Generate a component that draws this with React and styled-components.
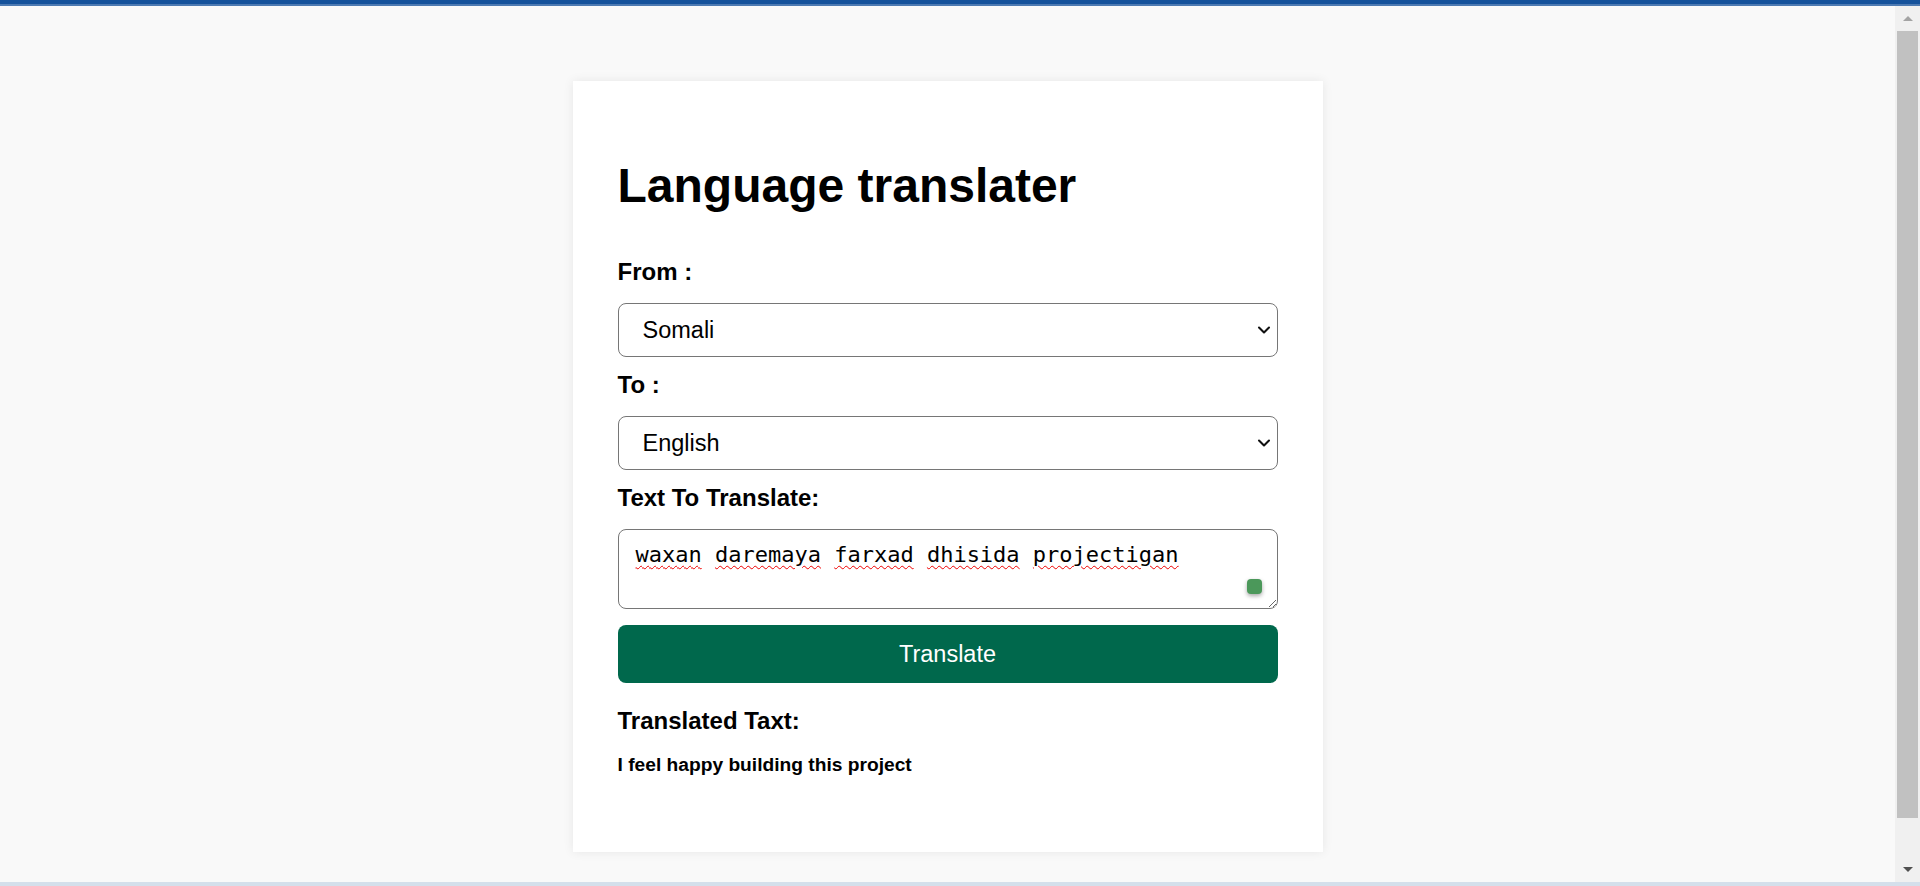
import React, { useState } from "react";
import styled, { createGlobalStyle } from "styled-components";
import { ChevronDown } from "lucide-react";

const GlobalStyle = createGlobalStyle`
  html, body {
    margin: 0;
    height: 100%;
    overflow: hidden;
  }

  body {
    font-family: "Liberation Sans", Arial, sans-serif;
    background: #f9f9f9;
    color: #000;
  }
`;

const languages = ["Somali", "English", "Arabic", "French", "Spanish"];

const words = "waxan daremaya farxad dhisida projectigan";

const LanguageSelect = ({ value, onChange }) => (
  <SelectWrap>
    <Select value={value} onChange={(e) => onChange(e.target.value)}>
      {languages.map((lang) => (
        <option key={lang} value={lang}>
          {lang}
        </option>
      ))}
    </Select>
    <Chevron size={20} strokeWidth={2.5} />
  </SelectWrap>
);

const App = () => {
  const [from, setFrom] = useState("Somali");
  const [to, setTo] = useState("English");
  const [text, setText] = useState(words);

  return (
    <Shell>
      <GlobalStyle />
      <TopBar />
      <Body>
        <Viewport>
          <Page>
            <Card>
              <Title>Language translater</Title>

              <Label>From :</Label>
              <LanguageSelect value={from} onChange={setFrom} />

              <Label>To :</Label>
              <LanguageSelect value={to} onChange={setTo} />

              <Label>Text To Translate:</Label>
              <TextBox>
                <Backdrop aria-hidden="true">
                  {text.split(" ").map((word, i) => (
                    <React.Fragment key={i}>
                      {i > 0 && " "}
                      <Misspelled>{word}</Misspelled>
                    </React.Fragment>
                  ))}
                </Backdrop>
                <TextArea
                  spellCheck={false}
                  value={text}
                  onChange={(e) => setText(e.target.value)}
                />
                <Badge />
              </TextBox>

              <Button type="button">Translate</Button>

              <Label $top={24}>Translated Taxt:</Label>
              <Output>I feel happy building this project</Output>
            </Card>
          </Page>
        </Viewport>
        <Rail>
          <RailButton>
            <Arrow $up />
          </RailButton>
          <Track>
            <Thumb />
          </Track>
          <RailButton>
            <Arrow />
          </RailButton>
        </Rail>
      </Body>
      <BottomBar />
    </Shell>
  );
};

export default App;

const Shell = styled.div`
  height: 100vh;
  display: flex;
  flex-direction: column;
`;

const TopBar = styled.div`
  flex: none;
  height: 4px;
  background: #15529b;
  border-bottom: 2px solid #4d7ab2;
`;

const BottomBar = styled.div`
  flex: none;
  height: 4px;
  background: #d4dfeb;
`;

const Body = styled.div`
  flex: 1;
  min-height: 0;
  display: flex;
`;

const Viewport = styled.div`
  flex: 1;
  overflow: hidden;
  background: #f9f9f9;
`;

const Rail = styled.div`
  flex: none;
  width: 25px;
  display: flex;
  flex-direction: column;
  background: #f0f0f0;
`;

const RailButton = styled.div`
  height: 25px;
  display: flex;
  align-items: center;
  justify-content: center;
`;

const Arrow = styled.span`
  width: 0;
  height: 0;
  border-left: 5px solid transparent;
  border-right: 5px solid transparent;
  ${(p) =>
    p.$up
      ? "border-bottom: 5px solid #a3a3a3;"
      : "border-top: 5px solid #505050;"}
`;

const Track = styled.div`
  flex: 1;
  padding: 0 2px;
`;

const Thumb = styled.div`
  height: 787px;
  background: #c1c1c1;
`;

const Page = styled.main`
  display: flex;
  justify-content: center;
  padding: 75px 0 74px;
`;

const Card = styled.section`
  width: 750px;
  box-sizing: border-box;
  padding: 45px 45px 76px;
  background: #fff;
  box-shadow: 0 0 10px rgba(0, 0, 0, 0.08);
  display: flex;
  flex-direction: column;
`;

const Title = styled.h1`
  margin: 32px 0 31px;
  font-size: 48px;
  font-weight: bold;
  line-height: normal;
`;

const Label = styled.label`
  display: block;
  margin: ${(p) => p.$top || 14}px 0 17px;
  font-size: 24px;
  font-weight: bold;
  line-height: normal;
`;

const SelectWrap = styled.div`
  position: relative;
`;

const Select = styled.select`
  appearance: none;
  display: block;
  width: 100%;
  height: 54px;
  box-sizing: border-box;
  padding: 0 40px 0 24px;
  border: 1px solid #767676;
  border-radius: 8px;
  background: #fff;
  color: #000;
  font-family: "Liberation Sans", Arial, sans-serif;
  font-size: 23.5px;
`;

const Chevron = styled(ChevronDown)`
  position: absolute;
  right: 4px;
  top: 17px;
  color: #111;
  pointer-events: none;
`;

const TextBox = styled.div`
  position: relative;
  height: 80px;
  background: #fff;
  border-radius: 8px;
`;

const monoText = `
  box-sizing: border-box;
  padding: 12px 17px;
  font-family: "DejaVu Sans Mono", "Liberation Mono", monospace;
  font-size: 22px;
  line-height: normal;
  white-space: pre-wrap;
`;

const Backdrop = styled.div`
  ${monoText}
  position: absolute;
  inset: 0;
  border: 1px solid transparent;
  color: transparent;
  pointer-events: none;
`;

const Misspelled = styled.span`
  text-decoration: underline wavy #ee0000;
  text-decoration-thickness: 1.3px;
  text-underline-offset: 3px;
`;

const TextArea = styled.textarea`
  ${monoText}
  position: relative;
  display: block;
  width: 100%;
  height: 80px;
  margin: 0;
  border: 1px solid #767676;
  border-radius: 8px;
  background: transparent;
  color: #000;
  outline: none;
`;

const Badge = styled.span`
  position: absolute;
  right: 16px;
  bottom: 15px;
  width: 15px;
  height: 15px;
  border-radius: 4px;
  background: #4b985a;
  box-shadow: 0 2px 4px rgba(0, 0, 0, 0.35);
`;

const Button = styled.button`
  margin-top: 16px;
  width: 100%;
  height: 58px;
  border: none;
  border-radius: 8px;
  background: #00684c;
  color: #fff;
  font-family: "Liberation Sans", Arial, sans-serif;
  font-size: 23.5px;
  cursor: pointer;
`;

const Output = styled.p`
  margin: 2px 0 0;
  font-size: 19.2px;
  font-weight: bold;
  line-height: normal;
`;
